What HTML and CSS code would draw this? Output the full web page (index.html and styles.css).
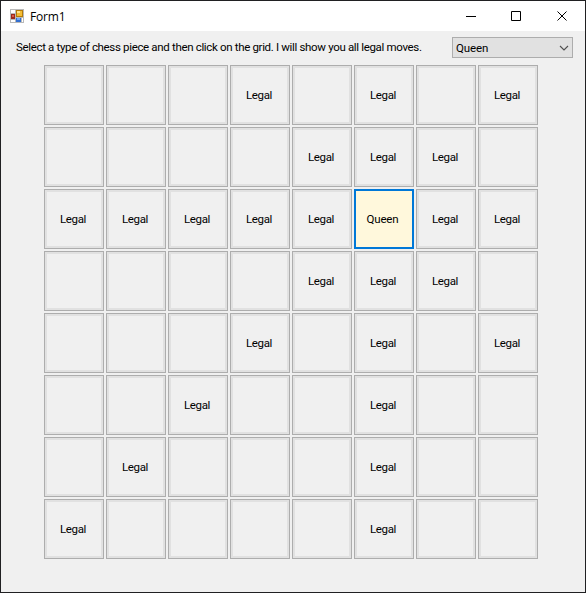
FILE: index.html
```
<!DOCTYPE html>
<html lang="en">
<head>
<meta charset="utf-8">
<title>Form1</title>
<link rel="stylesheet" href="styles.css">
</head>
<body>
<div class="window">
  <header class="titlebar">
    <svg class="app-icon" width="14" height="14" viewBox="0 0 14 14" shape-rendering="crispEdges">
      <path fill="#b9b9b9" d="M0 0h14v14H0z"/>
      <path fill="#fff" d="M1 1h4v3H1zM1 11h4v2H1zM12 9h1v4h-1z"/>
      <path fill="#9c2a1c" d="M1 5h4v5H1z"/>
      <path fill="#dc5a48" d="M2 6h2v2H2z"/>
      <path fill="#b47b09" d="M6 1h7v7H6z"/>
      <path fill="#f4bd35" d="M7 2h5v5H7z"/>
      <path fill="#ffe38a" d="M7 2h3v2H7z"/>
      <path fill="#326fd1" d="M6 9h5v4H6z"/>
      <path fill="#75a9f4" d="M7 9h3v2H7z"/>
    </svg>
    <span class="title">Form1</span>
    <svg class="controls" width="104" height="12" viewBox="0 0 104 12" fill="none" stroke="#000">
      <path d="M0 6.5h10M45.500 1.500h9v9h-9z"/>
      <path d="M91.500 1.500l9 9M100.500 1.500l-9 9"/>
    </svg>
  </header>
  <div class="toolbar">
    <span class="prompt">Select a type of chess piece and then click on the grid. I will show you all legal moves.</span>
    <div class="select"><span>Queen</span>
      <svg width="10" height="6" viewBox="0 0 10 6" fill="none" stroke="#505050" stroke-width="1.1"><path d="M1 1l4 4 4-4"/></svg>
    </div>
  </div>
  <main class="board" id="board"></main>
</div>
<script src="board.js"></script>
</body>
</html>
```
FILE: styles.css
```
* { box-sizing: border-box; }
body {
  margin: 0;
  font-family: Roboto, "Liberation Sans", sans-serif;
  font-size: 11.5px;
  color: #000;
}
.window {
  width: 586px;
  height: 593px;
  border: 1px solid #202022;
  background: #f0f0f0;
}
.titlebar {
  height: 30px;
  display: flex;
  align-items: center;
  background: #fff;
  padding: 0 15px 0 9px;
}
.app-icon { margin-right: 6px; }
.title {
  font-family: "Open Sans", sans-serif;
  font-size: 12px;
  letter-spacing: -0.2px;
}
.controls { margin-left: auto; }
.toolbar {
  height: 34px;
  display: flex;
  justify-content: space-between;
  padding: 6px 12px 0 15px;
}
.prompt {
  line-height: 20px;
  white-space: nowrap;
  letter-spacing: -0.335px;
}
.select {
  width: 121px;
  height: 21px;
  display: flex;
  align-items: center;
  justify-content: space-between;
  padding: 1px 3px 0;
  border: 1px solid #adadad;
  background: #e1e1e1;
  letter-spacing: -0.1px;
}
.board {
  display: grid;
  grid-template-columns: repeat(8, 60px);
  grid-auto-rows: 60px;
  gap: 2px;
  margin-left: 43px;
}
.cell {
  display: flex;
  align-items: center;
  justify-content: center;
  padding-right: 2px;
  border: 1px solid #adadad;
  box-shadow: inset 0 0 0 2px #e1e1e1;
  letter-spacing: -0.35px;
}
.cell.selected {
  border: 2px solid #0078d7;
  background: #fff8dc;
  box-shadow: none;
  padding-right: 3px;
  letter-spacing: -0.15px;
}
```
FILE: board.js
```
const board = document.getElementById("board");
const queen = { row: 2, col: 5 };
for (let row = 0; row < 8; row++) {
  for (let col = 0; col < 8; col++) {
    const cell = document.createElement("div");
    cell.className = "cell";
    const dr = Math.abs(row - queen.row);
    const dc = Math.abs(col - queen.col);
    if (dr === 0 && dc === 0) {
      cell.classList.add("selected");
      cell.textContent = "Queen";
    } else if (dr === 0 || dc === 0 || dr === dc) {
      cell.textContent = "Legal";
    }
    board.append(cell);
  }
}
```
